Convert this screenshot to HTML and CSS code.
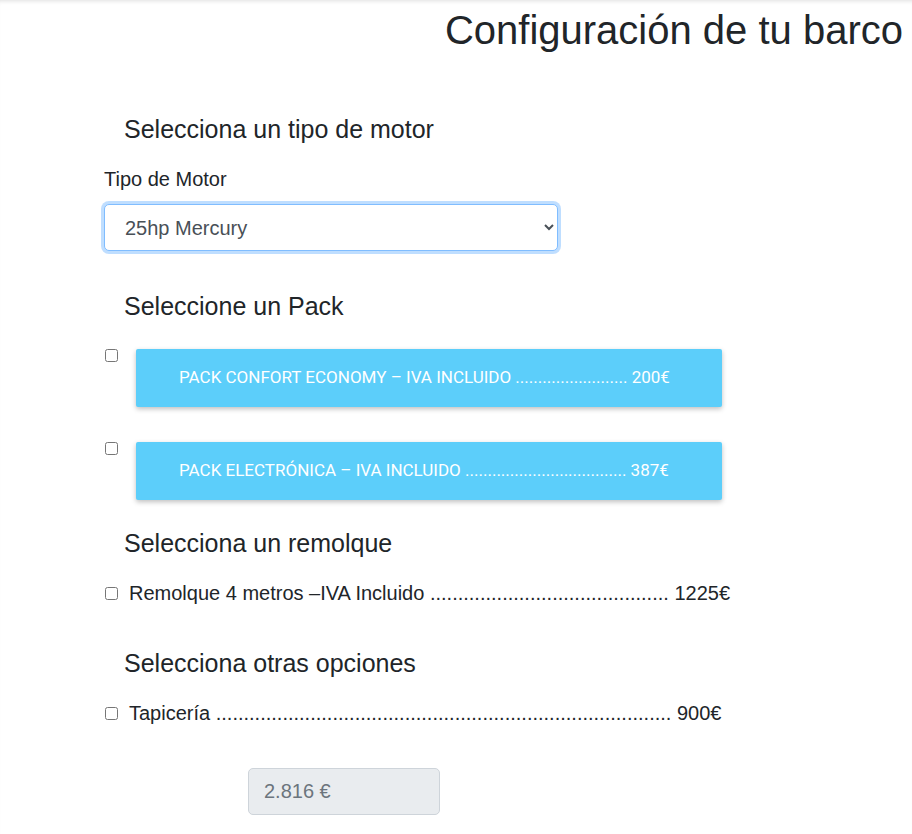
FILE: index.html
```html
<!DOCTYPE html>
<html lang="es">
<head>
<meta charset="UTF-8">
<meta name="viewport" content="width=device-width, initial-scale=1.0">
<title>Configuración de tu barco</title>
<link rel="stylesheet" href="styles.css">
</head>
<body>
<div class="page">
  <h1 class="title">Configuración de tu barco</h1>

  <form class="config">
    <h5 class="section">Selecciona un tipo de motor</h5>
    <label class="field-label" for="motor">Tipo de Motor</label>
    <select id="motor" class="motor-select">
      <option>25hp Mercury</option>
      <option>40hp Mercury</option>
      <option>60hp Mercury</option>
    </select>

    <h5 class="section section-pack">Seleccione un Pack</h5>
    <div class="pack">
      <input type="checkbox" id="pack1">
      <label class="pack-btn" for="pack1">PACK CONFORT ECONOMY – IVA INCLUIDO ......................... 200€</label>
    </div>
    <div class="pack pack-last">
      <input type="checkbox" id="pack2">
      <label class="pack-btn" for="pack2">PACK ELECTRÓNICA – IVA INCLUIDO .................................... 387€</label>
    </div>

    <h5 class="section">Selecciona un remolque</h5>
    <div class="option">
      <input type="checkbox" id="remolque">
      <label for="remolque">Remolque 4 metros –IVA Incluido ........................................... 1225€</label>
    </div>

    <h5 class="section section-gap">Selecciona otras opciones</h5>
    <div class="option">
      <input type="checkbox" id="tapiceria">
      <label for="tapiceria">Tapicería .................................................................................. 900€</label>
    </div>

    <div class="total-row">
      <input type="text" class="total" value="2.816 €" readonly>
    </div>
  </form>
</div>
</body>
</html>
```

FILE: styles.css
```css
body {
  margin: 0;
  font-family: "Liberation Sans", Arial, sans-serif;
  font-size: 20px;
  line-height: 1.5;
  color: #212529;
  background: #fff;
}
.page {
  min-height: 834px;
  box-shadow: inset 0 4px 4px -3px rgba(0, 0, 0, 0.13);
  overflow: hidden;
}
.title {
  margin: 6px 9px 0 0;
  text-align: right;
  font-size: 40px;
  font-weight: 500;
  line-height: 1.2;
}
.config {
  display: flex;
  flex-direction: column;
  align-items: flex-start;
  margin: 60px 0 0 104px;
}
.section {
  margin: 0;
  padding-left: 20px;
  font-size: 25px;
  font-weight: 500;
  line-height: 1.2;
}
.section-pack {
  margin-top: 40px;
}
.section-gap {
  margin-top: 40px;
}
.field-label {
  margin-top: 20px;
}
.motor-select {
  margin-top: 10px;
  width: 454px;
  height: 47px;
  padding: 0 12px 0 16px;
  font-family: "Liberation Sans", Arial, sans-serif;
  font-size: 20px;
  color: #495057;
  background: #fff;
  border: 1px solid #80bdff;
  border-radius: 5px;
  box-shadow: 0 0 0 3px rgba(0, 123, 255, 0.25);
  outline: none;
}
.pack {
  display: flex;
  align-items: flex-start;
  margin-top: 28px;
}
.pack + .pack {
  margin-top: 35px;
}
.pack-last {
  margin-bottom: 28px;
}
.pack input {
  margin: 0 18px 0 1px;
  width: 13px;
  height: 13px;
}
.pack-btn {
  display: flex;
  align-items: center;
  box-sizing: border-box;
  width: 586px;
  height: 58px;
  padding-left: 43px;
  background: #5ccefa;
  color: #fff;
  font-family: "Roboto", sans-serif;
  font-size: 17px;
  border-radius: 2px;
  box-shadow: 0 2px 5px rgba(0, 0, 0, 0.25);
  cursor: pointer;
}
.option {
  display: flex;
  align-items: center;
  margin-top: 20px;
}
.option input {
  margin: 0 11px 0 1px;
  width: 13px;
  height: 13px;
}
.total-row {
  margin: 40px 0 0 144px;
}
.total {
  box-sizing: border-box;
  width: 192px;
  height: 47px;
  padding: 0 15px;
  font-family: "Liberation Sans", Arial, sans-serif;
  font-size: 20px;
  color: #6c757d;
  background: #e9ecef;
  border: 1px solid #ced4da;
  border-radius: 5px;
  outline: none;
}
```
